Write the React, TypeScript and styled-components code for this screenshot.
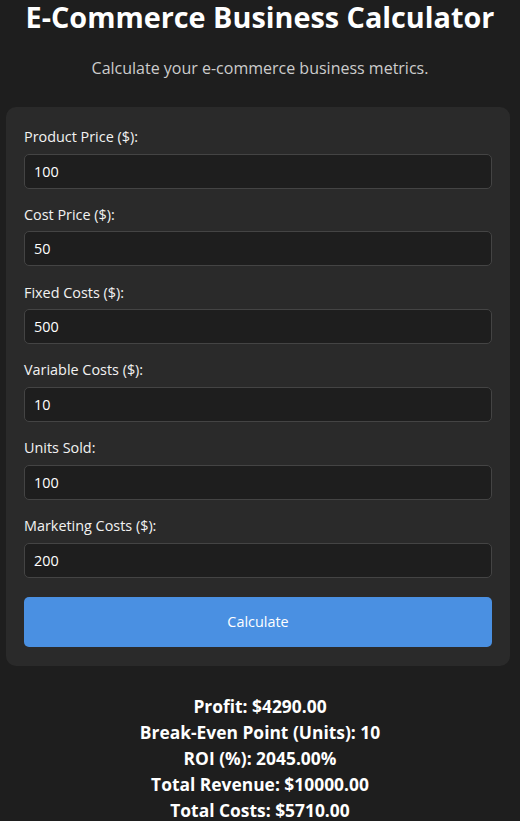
import React, { useState } from "react";
import styled, { createGlobalStyle } from "styled-components";

const Global = createGlobalStyle`
  html, body {
    margin: 0;
    padding: 0;
    background: #1e1e1e;
    color: #ffffff;
    font-family: "Open Sans", "Noto Sans", sans-serif;
  }
  * { box-sizing: border-box; }
`;

const Page = styled.div`
  display: flex;
  flex-direction: column;
  padding: 0 10px 0 6px;
`;

const Title = styled.h1`
  margin: 0;
  font-size: 28.8px;
  line-height: 33px;
  font-weight: 700;
  text-align: center;
  white-space: nowrap;
  color: #ffffff;
  padding-left: 4px;
`;

const Subtitle = styled.p`
  margin: 24px 0 28px;
  font-size: 16px;
  line-height: 22px;
  text-align: center;
  color: #cccccc;
  padding-left: 4px;
`;

const Card = styled.form`
  display: flex;
  flex-direction: column;
  background: #2a2a2a;
  border-radius: 10px;
  padding: 20px 18px 19px;
`;

const Field = styled.div`
  display: flex;
  flex-direction: column;
  margin-bottom: 16.2px;
  &:last-of-type {
    margin-bottom: 19px;
  }
`;

const Label = styled.label`
  font-size: 14.4px;
  line-height: 19.6px;
  color: #f2f2f2;
  margin-bottom: 7px;
`;

const Input = styled.input`
  height: 35px;
  padding: 0 9px;
  background: #1e1e1e;
  border: 1px solid #444444;
  border-radius: 5px;
  color: #ffffff;
  font-family: inherit;
  font-size: 14.4px;
  outline: none;
`;

const Button = styled.button`
  height: 50px;
  background: #4a90e2;
  border: none;
  border-radius: 5px;
  color: #ffffff;
  font-family: inherit;
  font-size: 14.4px;
  cursor: pointer;
`;

const Results = styled.div`
  display: flex;
  flex-direction: column;
  align-items: center;
  margin-top: 27px;
  padding-left: 4px;
`;

const ResultLine = styled.div`
  font-size: 17.4px;
  line-height: 26px;
  font-weight: 700;
  color: #ffffff;
`;

const fields = [
  { key: "price", label: "Product Price ($):", value: "100" },
  { key: "cost", label: "Cost Price ($):", value: "50" },
  { key: "fixed", label: "Fixed Costs ($):", value: "500" },
  { key: "variable", label: "Variable Costs ($):", value: "10" },
  { key: "units", label: "Units Sold:", value: "100" },
  { key: "marketing", label: "Marketing Costs ($):", value: "200" },
];

export default function App() {
  const [values, setValues] = useState<Record<string, string>>(
    Object.fromEntries(fields.map((f) => [f.key, f.value]))
  );
  return (
    <>
      <Global />
      <Page>
        <Title>E-Commerce Business Calculator</Title>
        <Subtitle>Calculate your e-commerce business metrics.</Subtitle>
        <Card onSubmit={(e) => e.preventDefault()}>
          {fields.map((f) => (
            <Field key={f.key}>
              <Label htmlFor={f.key}>{f.label}</Label>
              <Input
                id={f.key}
                type="number"
                value={values[f.key]}
                onChange={(e) => setValues({ ...values, [f.key]: e.target.value })}
              />
            </Field>
          ))}
          <Button type="submit">Calculate</Button>
        </Card>
        <Results>
          <ResultLine>Profit: $4290.00</ResultLine>
          <ResultLine>Break-Even Point (Units): 10</ResultLine>
          <ResultLine>ROI (%): 2045.00%</ResultLine>
          <ResultLine>Total Revenue: $10000.00</ResultLine>
          <ResultLine>Total Costs: $5710.00</ResultLine>
        </Results>
      </Page>
    </>
  );
}
